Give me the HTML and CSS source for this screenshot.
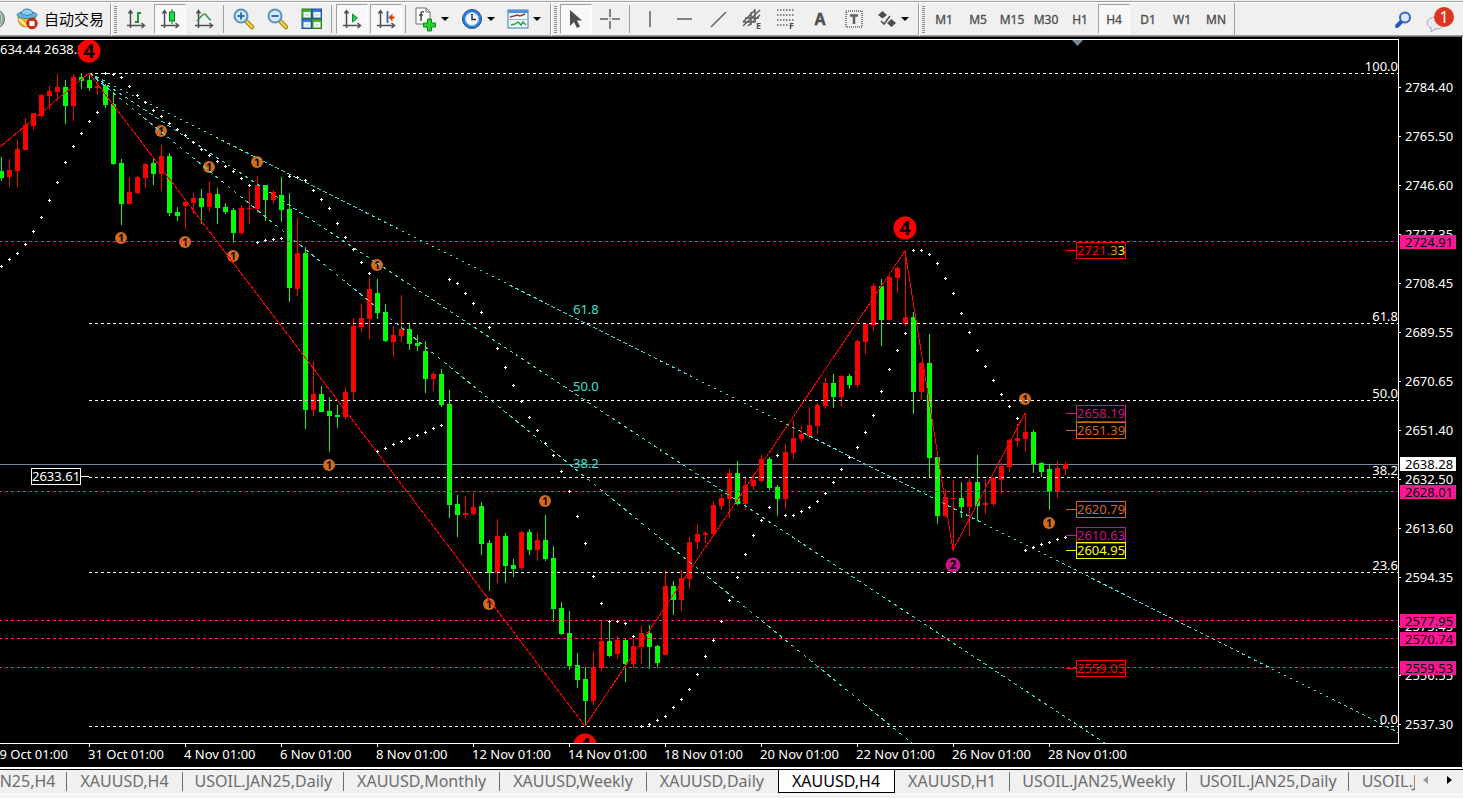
FILE: index.html
```html
<!DOCTYPE html>
<html lang="zh-CN">
<head>
<meta charset="utf-8">
<title>XAUUSD,H4</title>
<link rel="stylesheet" href="styles.css">
</head>
<body>
<header class="toolbar">
  <div class="group">
    <svg class="cut-icon" width="6" height="22"><circle cx="-5" cy="11" r="9.500" fill="#8aa594" stroke="#5d7a68"/><path d="M0 4q4 7 0 14" fill="none" stroke="#c9d8cd"/></svg>
    <button class="auto" type="button">
      <svg width="22" height="22"><path d="M2 9q0 10 8 10l8-5 2-6z" fill="#e9b92c" stroke="#b88a17"/><path d="M3 11q5 5 8 7" stroke="#fff0a0" stroke-width="2" fill="none"/><ellipse cx="11" cy="7" rx="10" ry="3.500" fill="#6fb2dc" stroke="#3a7fae"/><path d="M5 6q1-5 6-5t6 5q-6 3-12 0z" fill="#8ecbef" stroke="#3a7fae"/><circle cx="16" cy="15.500" r="5.200" fill="#d8301c" stroke="#a81c10"/><rect x="13.500" y="13" width="5" height="5" fill="#fff"/></svg>
      <span>自动交易</span>
    </button>
  </div>
  <div class="group charts">
    <i class="grip"></i>
    <button class="tool" type="button" aria-label="Bar chart"><svg width="20" height="20"><use href="#axes"/><path d="M12 3v11M12 4h3M9 13h3" stroke="#0c8f2c" stroke-width="1.800" fill="none"/></svg></button>
    <button class="tool on" type="button" aria-label="Candlesticks"><svg width="20" height="20"><use href="#axes"/><path d="M12 0v15" stroke="#087a1e"/><rect x="9.500" y="3" width="5" height="9" fill="#1fdc4a" stroke="#087a1e"/></svg></button>
    <button class="tool" type="button" aria-label="Line chart"><svg width="20" height="20"><use href="#axes"/><path d="M3 12C6 9 9 4 11 5s3 5 6 6" stroke="#3f8f50" stroke-width="1.500" fill="none"/></svg></button>
    <i class="sep"></i>
    <button class="tool" type="button" aria-label="Zoom in"><svg width="22" height="22"><use href="#lens"/><path d="M8 4.500v7M4.500 8h7" stroke="#3c6e9c" stroke-width="2"/></svg></button>
    <button class="tool" type="button" aria-label="Zoom out"><svg width="22" height="22"><use href="#lens"/><path d="M4.500 8h7" stroke="#3c6e9c" stroke-width="2"/></svg></button>
    <button class="tool" type="button" aria-label="Tile windows"><svg width="22" height="22"><g stroke-width="1"><rect x="1" y="1" width="9.500" height="9.500" fill="#4da93a" stroke="#2b7d1d"/><rect x="11" y="1" width="9.500" height="9.500" fill="#3d78d8" stroke="#1e4da5"/><rect x="1" y="11" width="9.500" height="9.500" fill="#3d78d8" stroke="#1e4da5"/><rect x="11" y="11" width="9.500" height="9.500" fill="#4da93a" stroke="#2b7d1d"/></g><path d="M2.500 4h7v5.500h-7zM12.500 4h7v5.500h-7zM2.500 14h7v5.500h-7zM12.500 14h7v5.500h-7z" fill="#eef6ee"/><path d="M4 7h4M14 7h4M4 17h4M14 17h4" stroke="#b8cbe0"/></svg></button>
    <i class="sep"></i>
    <button class="tool on" type="button" aria-label="Auto scroll"><svg width="20" height="20"><use href="#axes"/><path d="M10.500 5v8l5-4z" fill="#35c552" stroke="#0c8f2c"/></svg></button>
    <button class="tool on" type="button" aria-label="Chart shift"><svg width="20" height="20"><use href="#axes"/><path d="M11.500 2v12" stroke="#1c6aa8" stroke-width="1.800"/><path d="M12.500 8.500l4-4v3h2v2h-2v3z" fill="#d3420f"/></svg></button>
    <i class="sep"></i>
    <button class="tool drop" type="button" aria-label="Indicators"><svg width="22" height="24"><path d="M1 1h10l4 4v12H1z" fill="#fff" stroke="#6c6c6c"/><path d="M11 1v4h4" fill="none" stroke="#6c6c6c"/><path d="M9 5q-3-1-3 2v7M4 8h4" fill="none" stroke="#444" stroke-width="1.500"/><path d="M12.500 12h4v4h4v4h-4v4h-4v-4h-4v-4h4z" fill="#25d432" stroke="#0b8a18"/></svg><i class="caret"></i></button>
    <button class="tool drop" type="button" aria-label="Periods"><svg width="22" height="22"><circle cx="11" cy="11" r="9.500" fill="#2f7fd6" stroke="#155096"/><circle cx="11" cy="11" r="6.500" fill="#f4f7fa" stroke="#9cc6ee"/><path d="M11 6v5.500h4" fill="none" stroke="#333" stroke-width="1.500"/></svg><i class="caret"></i></button>
    <button class="tool drop" type="button" aria-label="Templates"><svg width="22" height="22"><rect x="1" y="2" width="20" height="18" fill="#f3faff" stroke="#3a7cbd"/><path d="M1 3.500h20" stroke="#4a93d8" stroke-width="3"/><path d="M1 11.500h20" stroke="#85b5dc"/><path d="M3 9l4-1 3-1 3 1 5-2" stroke="#a33428" stroke-width="1.500" fill="none"/><path d="M4 17l4-1 3-2 3 3 2-3 3 3" stroke="#2c9f3e" stroke-width="1.500" fill="none"/></svg><i class="caret"></i></button>
  </div>
  <div class="group">
    <i class="grip"></i>
    <button class="tool on" type="button" aria-label="Cursor"><svg width="20" height="20"><path d="M4 1v16l4-4 3 6 3-1.500-3-6h5z" fill="#4d4d4d"/></svg></button>
    <button class="tool" type="button" aria-label="Crosshair"><svg class="line" width="20" height="20"><path d="M10 0v8M10 12v8M0 10h8M12 10h8" /><path d="M9.500 10h1"/></svg></button>
    <i class="sep"></i>
    <button class="tool" type="button" aria-label="Vertical line"><svg class="line" width="20" height="20"><path d="M10 2v16"/></svg></button>
    <button class="tool" type="button" aria-label="Horizontal line"><svg class="line" width="20" height="20"><path d="M3 10h15"/></svg></button>
    <button class="tool" type="button" aria-label="Trendline"><svg class="line" width="20" height="20"><path d="M3 18L18 3"/></svg></button>
    <button class="tool" type="button" aria-label="Equidistant channel"><svg class="line" width="20" height="22"><path d="M1 14L13 2M1 18L18 2M6 18L18 7M3 10h14M1 14h13M9 4v13M13 1v12"/><text class="sub" x="14" y="21">E</text></svg></button>
    <button class="tool" type="button" aria-label="Fibonacci retracement"><svg class="line dots" width="20" height="22"><path d="M1 2h17M1 7h17M1 12h17M1 17h11"/><text class="sub" x="13" y="21">F</text></svg></button>
    <button class="tool letter" type="button">A</button>
    <button class="tool" type="button" aria-label="Text label"><svg class="line" width="20" height="22"><path d="M2 3h16v16H2z" stroke-dasharray="1 1"/><path d="M6 7.500h8M10 7.500V16" stroke-width="2.500"/></svg></button>
    <button class="tool drop" type="button" aria-label="Arrows"><svg width="20" height="20"><path d="M5.500 2l4.500 4-4.500 3.500L1 6zM14.500 10l4.500 4-4.500 4-4.500-4z" fill="#4d4d4d"/><path d="M4 12l3 3 6-8" fill="none" stroke="#4d4d4d" stroke-width="1.500"/></svg><i class="caret"></i></button>
  </div>
  <div class="group">
    <i class="grip"></i>
    <button class="tool" type="button">M1</button>
    <button class="tool" type="button">M5</button>
    <button class="tool" type="button">M15</button>
    <button class="tool" type="button">M30</button>
    <button class="tool" type="button">H1</button>
    <button class="tool on" type="button">H4</button>
    <button class="tool" type="button">D1</button>
    <button class="tool" type="button">W1</button>
    <button class="tool" type="button">MN</button>
  </div>
  <div class="status">
    <button class="plain" type="button" aria-label="Search"><svg width="18" height="18"><path d="M8 10l-5 5" stroke="#2c55b0" stroke-width="4" stroke-linecap="round"/><circle cx="11" cy="6.500" r="5" fill="#dce9fb" stroke="#3465c6" stroke-width="2"/></svg></button>
    <button class="plain" type="button" aria-label="1 message"><svg width="30" height="28"><ellipse cx="10" cy="17" rx="9" ry="6" fill="#e9ebf3" stroke="#a5a8b5"/><path d="M5 21l0 5 6-4" fill="#e9ebf3" stroke="#a5a8b5"/><circle cx="18" cy="11" r="10" fill="#e03420"/><text class="count" x="18" y="17">1</text></svg></button>
  </div>
</header>

<main class="chart">
  <div class="plot">
    <svg class="canvas" role="img" aria-label="XAUUSD H4 price chart">
      <g transform="translate(0,-40)">
        <text x="0" y="54">634.44 2638.28</text>
        <path d="M1072 40h11l-5.500 6z" fill="#778899"/>
        <path class="bid" d="M0 464.500h6000"/>
        <g id="bars"></g>
        <g id="marks"></g>
        <g class="fibo">
          <path d="M89 73.500h6000M89 323.500h6000M89 400.500h6000M89 477.500h6000M89 572.500h6000M89 726.500h6000"/>
        </g>
        <g class="support">
          <path d="M-1 241.500h6000M-1 491.500h6000M-1 620.500h6000M-1 638.500h6000M-1 667.500h6000"/>
        </g>
        <g class="fan">
          <path d="M89.500 73.500L1398.500 732.500" stroke-dasharray="3.359 3.359"/>
          <path d="M89.500 73.500L1105.500 743.500" stroke-dasharray="3.594 3.594"/>
          <path d="M89.500 73.500L912.500 743.500" stroke-dasharray="3.868 3.868"/>
          <text x="573" y="314">61.8</text>
          <text x="573" y="391">50.0</text>
          <text x="573" y="468">38.2</text>
        </g>
        <path class="zigzag" d="M0 147L89 73L585 726L905 251L953 550L1025 413"/>
        <g id="sar"></g>
        <g id="levels"></g>
        <g class="end">
          <text x="100%" y="71">100.0</text>
          <text x="100%" y="321">61.8</text>
          <text x="100%" y="398">50.0</text>
          <text x="100%" y="475">38.2</text>
          <text x="100%" y="570">23.6</text>
          <text x="100%" y="724">0.0</text>
        </g>
      </g>
    </svg>
  </div>
  <svg class="prices"><g id="prices" transform="translate(0,-39)"></g></svg>
  <svg class="times" id="times"></svg>
</main>

<footer class="tabs">
  <nav class="list">
    <button class="tab first long" type="button">USOIL.JAN25,H4</button>
    <button class="tab" type="button">XAUUSD,H4</button>
    <button class="tab long" type="button">USOIL.JAN25,Daily</button>
    <button class="tab" type="button">XAUUSD,Monthly</button>
    <button class="tab" type="button">XAUUSD,Weekly</button>
    <button class="tab last" type="button">XAUUSD,Daily</button>
    <button class="tab active" type="button">XAUUSD,H4</button>
    <button class="tab" type="button">XAUUSD,H1</button>
    <button class="tab long" type="button">USOIL.JAN25,Weekly</button>
    <button class="tab long" type="button">USOIL.JAN25,Daily</button>
    <button class="tab" type="button">USOIL.JAN25</button>
  </nav>
  <div class="scroll">
    <button class="plain" type="button" aria-label="Scroll left"><svg width="6" height="8"><path d="M5 0v8L0 4z" fill="#9a9a9a"/></svg></button>
    <button class="plain" type="button" aria-label="Scroll right"><svg width="6" height="8"><path d="M0 0v8l5-4z" fill="#000"/></svg></button>
  </div>
</footer>

<svg class="defs" width="0" height="0">
  <defs>
    <g id="axes"><path d="M4.500 2v17M1 16.500h17" stroke="#4f4f4f" stroke-width="1.500" fill="none"/><path d="M2.500 4.500l2-3 2 3M15.500 14l3 2.500-3 2.500" fill="none" stroke="#4f4f4f" stroke-width="1.500"/></g>
    <g id="lens"><path d="M13 13l6 6" stroke="#9a7410" stroke-width="4.500" stroke-linecap="round"/><path d="M13 13l6 6" stroke="#f0cf45" stroke-width="2.500" stroke-linecap="round"/><circle cx="8" cy="8" r="6.500" fill="#cfe9fa" stroke="#5793c6" stroke-width="2"/></g>
  </defs>
</svg>
<script src="chart.js"></script>
</body>
</html>
```
FILE: styles.css
```css
* { box-sizing: border-box; }

body {
  margin: 0;
  height: 100vh;
  display: flex;
  flex-direction: column;
  overflow: hidden;
  background: #f0f0f0;
  font-family: "Noto Sans", "Noto Sans CJK SC", sans-serif;
  font-size: 13px;
}

button {
  margin: 0;
  padding: 0;
  border: 0;
  background: none;
  font: inherit;
  color: inherit;
}

svg { display: block; flex: none; }

/* toolbar */
.toolbar {
  display: flex;
  height: 37px;
  flex: none;
  padding-top: 3px;
  border-bottom: 1px solid #696969;
  box-shadow: inset 0 1px #f0f0f0, inset 0 2px #a0a0a0, inset 0 3px #fff, inset 0 -1px #a0a0a0;
  color: #4d4d4d;
}

.toolbar svg { overflow: visible; }

.group {
  display: flex;
  align-items: center;
  border-right: 1px solid #a0a0a0;
  padding: 0 0 1px 3px;
}

.group:first-child { padding: 0 6px 1px 0; overflow: hidden; }

.group + .group { box-shadow: inset 1px 0 #fff; }

.group.charts { padding-right: 2px; }

.cut-icon { margin-right: 10px; }

.auto {
  display: flex;
  align-items: center;
  gap: 6px;
  font-family: "Noto Sans CJK SC", sans-serif;
  font-size: 15px;
  line-height: 24px;
  color: #000;
}

.grip {
  width: 3px;
  height: 27px;
  margin-right: 3px;
  background: repeating-linear-gradient(#8c8c8c 0 1px, #f0f0f0 1px 2px);
}

.sep {
  width: 1px;
  height: 28px;
  margin: 0 4px 0 1px;
  background: #a0a0a0;
}

.tool {
  display: flex;
  align-items: center;
  justify-content: center;
  width: 32px;
  height: 30px;
  margin-right: 2px;
  font-size: 12px;
  -webkit-text-stroke: 0.300px;
}

.tool.on {
  background: #f8f8f8;
  border: 1px solid #fff;
  border-top-color: #a0a0a0;
  border-left-color: #a0a0a0;
}

.tool.drop {
  width: 44px;
  justify-content: flex-start;
  gap: 4px;
  padding-left: 5px;
}

.tool.letter { font-size: 16px; font-weight: 700; }

.caret {
  border: 4px solid transparent;
  border-top-color: #000;
  border-bottom: 0;
}

.line { fill: none; stroke: #5f5f5f; stroke-width: 1.500px; }
.dots path { stroke-dasharray: 1.500 1.500; }
.sub { font-size: 9px; font-weight: 700; fill: #4d4d4d; stroke: none; }

.status {
  display: flex;
  align-items: center;
  gap: 14px;
  margin-left: auto;
  padding-right: 7px;
}

.count { font-size: 16px; fill: #fff; text-anchor: middle; }

/* chart */
.chart {
  flex: 1;
  min-height: 0;
  display: grid;
  grid-template-columns: minmax(0, 1fr) 63px;
  grid-template-rows: minmax(0, 1fr) 23px;
  padding-top: 2px;
  background: #000;
  border-right: 1px solid #f0f0f0;
}

.plot {
  border: solid #fff;
  border-width: 1px 1px 1px 0;
  overflow: hidden;
}

.canvas { width: 100%; height: 100%; }
.prices { width: 100%; height: 100%; }
.times { grid-column: 1 / 3; width: 100%; height: 100%; }

.chart text { font-size: 13px; fill: #fff; }
.end { text-anchor: end; }
.bid { stroke: #778899; }
.fibo { stroke: #fff; stroke-dasharray: 3 3; }
.support { stroke: #ff1493; stroke-dasharray: 3 3; }
.fan { stroke: #40e0d0; fill: none; }
.chart .fan text { fill: #40e0d0; stroke: none; }
.zigzag { stroke: #f00; fill: none; shape-rendering: crispEdges; }
.fan path { shape-rendering: crispEdges; }
.up { fill: #f00; }
.down { fill: #0f0; }
.dot { fill: #fff; }

.chart .mark { fill: #000; font-weight: 700; text-anchor: middle; }
.chart .s1 { font-size: 10px; }
.chart .s2 { font-size: 12px; }
.chart .s4 { font-size: 20px; }
.chart .tag { fill: #000; }

/* chart tabs */
.tabs {
  display: flex;
  justify-content: space-between;
  height: 31px;
  flex: none;
  padding-top: 2px;
  box-shadow: inset 0 1px #fff, inset 0 2px #fff, inset 0 -3px #f0f0f0, inset 0 -4px #fff;
}

.list {
  display: flex;
  align-items: flex-start;
  flex: 1;
  min-width: 0;
  height: 25px;
  overflow: hidden;
  border-top: 1px solid #000;
}

.tab {
  flex: none;
  position: relative;
  height: 23px;
  padding: 0 14px 0 13px;
  font-size: 16px;
  line-height: 23px;
  color: #6d6d6d;
  white-space: nowrap;
}

.tab.long { padding: 0 12px; }

.tab::after {
  content: "";
  position: absolute;
  right: 0;
  top: 2px;
  height: 19px;
  width: 1px;
  background: #6d6d6d;
}

.tab.first { margin-left: -78px; }
.tab.last::after, .tab.active::after { display: none; }

.tab.active {
  background: #fff;
  color: #000;
  border: solid #000;
  border-width: 0 1px 1px;
}

.scroll {
  display: flex;
  align-items: center;
  gap: 18px;
  padding: 0 10px 8px 8px;
  border-top: 1px solid #000;
}
```
FILE: chart.js
```js
const NS = 'http://www.w3.org/2000/svg';
const STEP = 8;

function add(parent, name, attrs, text) {
  const el = document.createElementNS(NS, name);
  for (const key in attrs) el.setAttribute(key, attrs[key]);
  if (text !== undefined) el.textContent = text;
  parent.appendChild(el);
  return el;
}
const $ = (id) => document.getElementById(id);

// Each bar: direction, high, body top, body bottom, low, SAR dot; in thirds of a pixel below the segment base.
const segments = [
  { first: 0, base: 40, bars: `
d 351 393 414 423 679|u 357 390 411 441 658|u 300 327 393 441 640|u 234 255 330 330 613|u 219 219 258 270 574
u 162 165 228 234 532|u 138 153 168 210 481|u 102 141 156 180 427|d 120 141 198 252 367|u 102 111 198 243 319
d 99 111 123 147 280|d 105 120 144 153 244|u 108 138 144 165 217|d 132 138 195 204 100|d 156 192 372 375 103
d 357 369 492 555 112|u 411 456 492 492 139|u 408 411 459 462 166|u 369 372 414 444 187|d 354 369 402 435 211
u 315 348 402 453 229|d 339 348 519 528 250|d 501 516 528 543 268|u 480 486 498 567 286|u 459 474 489 522 307
d 447 474 501 552 328|u 423 459 501 516 346|d 444 462 504 552 364|d 489 501 516 522 379|d 504 510 579 609 394
u 495 504 579 585 415|u 447 504 507 552 436|u 408 435 507 519 607|d 435 435 480 543 601|u 450 456 480 492 598
d 411 465 510 546 595` },
  { first: 36, base: 170, bars: `
d 69 117 354 396 19|u 144 249 357 378 22|d 231 249 720 777 31|u 573 672 720 738 61|d 648 672 726 726 88
d 681 723 738 846 115|d 705 735 741 774 160|u 651 666 741 747 202|u 444 468 666 690 238|u 402 444 471 486 277
u 327 357 447 507 310|d 327 369 429 447 844|d 402 426 513 516 835|u 468 495 516 561 823|u 375 477 498 516 814
d 459 477 522 540 805|d 495 519 528 543 796|d 513 543 627 669 787|u 606 612 627 663 775|d 597 612 705 711 766` },
  { first: 56, base: 370, bars: `
d 60 102 405 444 -272|d 375 402 435 501 -260|u 378 429 435 444 -230|u 369 411 432 435 -200|d 396 408 522 555 -173
d 510 519 609 663 -128|u 447 498 609 639 -65|d 489 498 588 639 -8|d 567 585 597 621 46|u 483 486 594 600 94
d 477 486 540 555 142|u 489 510 540 573 181|d 435 510 567 573 220|d 528 564 717 756 256|d 696 714 792 795 304
d 723 789 888 900 364|d 849 885 930 954 439|d 891 927 993 1068 520|u 843 891 993 1005 619|u 753 813 894 903 700
d 753 813 858 861 754|u 798 810 852 867 754|d 807 810 882 936 760|u 807 828 882 897 799|u 768 789 831 882 1069
d 765 789 831 897 1063|d 825 828 879 894 1051|u 600 648 855 855 1039|d 633 648 690 735 1012|u 600 624 690 723 988
u 501 516 627 657 958|u 462 492 516 537 913|u 483 489 495 519 859|u 393 405 492 495 811|u 372 384 408 420 754
u 297 309 387 444 691|d 273 309 402 405 622|u 321 345 402 420 553|u 312 330 348 360 496|u 255 267 333 336 451
d 261 267 354 360 412|d 345 351 387 438 256|u 222 246 387 417 436|u 150 204 249 267 436|u 168 192 207 216 424
u 111 165 198 204 412|u 99 105 168 192 394|u 24 39 108 117 370|d 12 39 81 114 337|u 15 18 81 108 298
d 12 18 45 57 262` },
  { first: 107, base: 200, bars: `
u 420 423 555 564 742|u 369 372 426 462 697|u 249 258 375 393 646|d 237 258 360 438 574|u 228 231 360 363 508
u 198 204 234 279 451|u 150 351 372 378 400|d 336 351 576 642 151|u 486 489 576 600 151|d 402 489 774 834 163
d 768 771 948 972 190|u 867 891 948 951 235|u 840 894 897 1053 280|d 846 894 921 954 340|u 834 846 921 1008 397
d 765 846 918 963 451|u 837 909 915 942 499|u 831 834 912 918 541|u 789 798 840 882 583|u 717 720 801 816 619
u 672 714 723 741 655|u 639 696 717 756 1051|d 690 696 792 819 1042|d 786 789 816 831 1033|d 792 807 876 930 1027
u 783 804 876 894 1018|u 786 792 807 825 1012` },
];

for (const segment of segments) {
  segment.bars.trim().split(/[|\n]/).forEach((row, n) => {
    const [dir, ...raw] = row.trim().split(' ');
    const x = 1 + (segment.first + n) * STEP;
    const y = raw.map((v) => Math.floor(segment.base + v / 3));
    const cls = dir === 'u' ? 'up' : 'down';
    add($('bars'), 'rect', { class: cls, x, y: y[0], width: 1, height: y[3] - y[0] });
    add($('bars'), 'rect', { class: cls, x: x - 2, y: y[1], width: 5, height: y[2] - y[1] });
    add($('sar'), 'rect', { class: 'dot', x: x - 1, y: y[4], width: 3, height: 1 });
    add($('sar'), 'rect', { class: 'dot', x, y: y[4] - 1, width: 1, height: 3 });
  });
}

const circle = (x, y, r, fill, label, dy) => {
  add($('marks'), 'circle', { cx: x, cy: y, r, fill });
  add($('marks'), 'text', { class: 'mark s' + label, x, y: y + dy }, label);
};
[[121, 238], [161, 131], [185, 242], [209, 167], [233, 256], [257, 162], [329, 465], [377, 265],
  [489, 604], [545, 501], [1025, 399], [1049, 523]].forEach(([x, y]) => circle(x, y, 6, '#d2691e', 1, 4));
[[89, 51], [905, 228], [585, 745]].forEach(([x, y]) => circle(x, y, 11.5, '#f00', 4, 7));
circle(953, 565, 7.5, '#c71585', 2, 4);

const level = (price, y, color, left) => {
  const x = left || 1076;
  const g = $('levels');
  add(g, 'rect', { x: x + 0.5, y: y - 7.5, width: 49, height: 16, fill: 'none', stroke: color });
  add(g, 'path', { d: left ? `M${x + 50} ${y + 0.5}h8` : `M${x - 10} ${y + 0.5}h10`, stroke: color });
  return add(g, 'text', { x: x + 1, y: y + 5, style: `fill:${color}` }, price);
};
const highest = level('2721.', 250, '#f00');
add(highest, 'tspan', { fill: '#ff8000' }, '3');
add(highest, 'tspan', { fill: '#ff0' }, '3');
level('2658.19', 413, '#c71585');
level('2651.39', 430, '#d2691e');
level('2620.79', 509, '#d2691e');
level('2610.63', 535, '#c71585');
level('2604.95', 550, '#ff0');
level('2559.05', 668, '#f00');
level('2633.61', 476, '#fff', 31);

['2784.40', '2765.50', '2746.60', '2727.35', '2708.45', '2689.55', '2670.65', '2651.40', '2632.50',
  '2613.60', '2594.35', '2575.45', '2556.55', '2537.30'].forEach((price, n) => {
  const y = 87 + n * 49;
  add($('prices'), 'rect', { class: 'dot', x: 0, y, width: 2, height: 1 });
  add($('prices'), 'text', { x: 6, y: y + 5 }, price);
});

[['2724.91', 235], ['2638.28', 457], ['2628.01', 485], ['2577.95', 614], ['2570.74', 632], ['2559.53', 661]]
  .forEach(([price, y]) => {
    add($('prices'), 'rect', { x: 1, y, width: 56, height: 14, fill: price === '2638.28' ? '#fff' : '#ff1493' });
    add($('prices'), 'text', { class: 'tag', x: 6, y: y + 12 }, price);
  });

['29 Oct', '31 Oct', '4 Nov', '6 Nov', '8 Nov', '12 Nov', '14 Nov', '18 Nov', '20 Nov', '22 Nov', '26 Nov', '28 Nov']
  .forEach((day, n) => {
    const x = n * 96 - 7;
    add($('times'), 'rect', { class: 'dot', x, y: 0, width: 1, height: 3 });
    add($('times'), 'text', { x: x - 1, y: 15 }, day + ' 01:00');
  });
```
